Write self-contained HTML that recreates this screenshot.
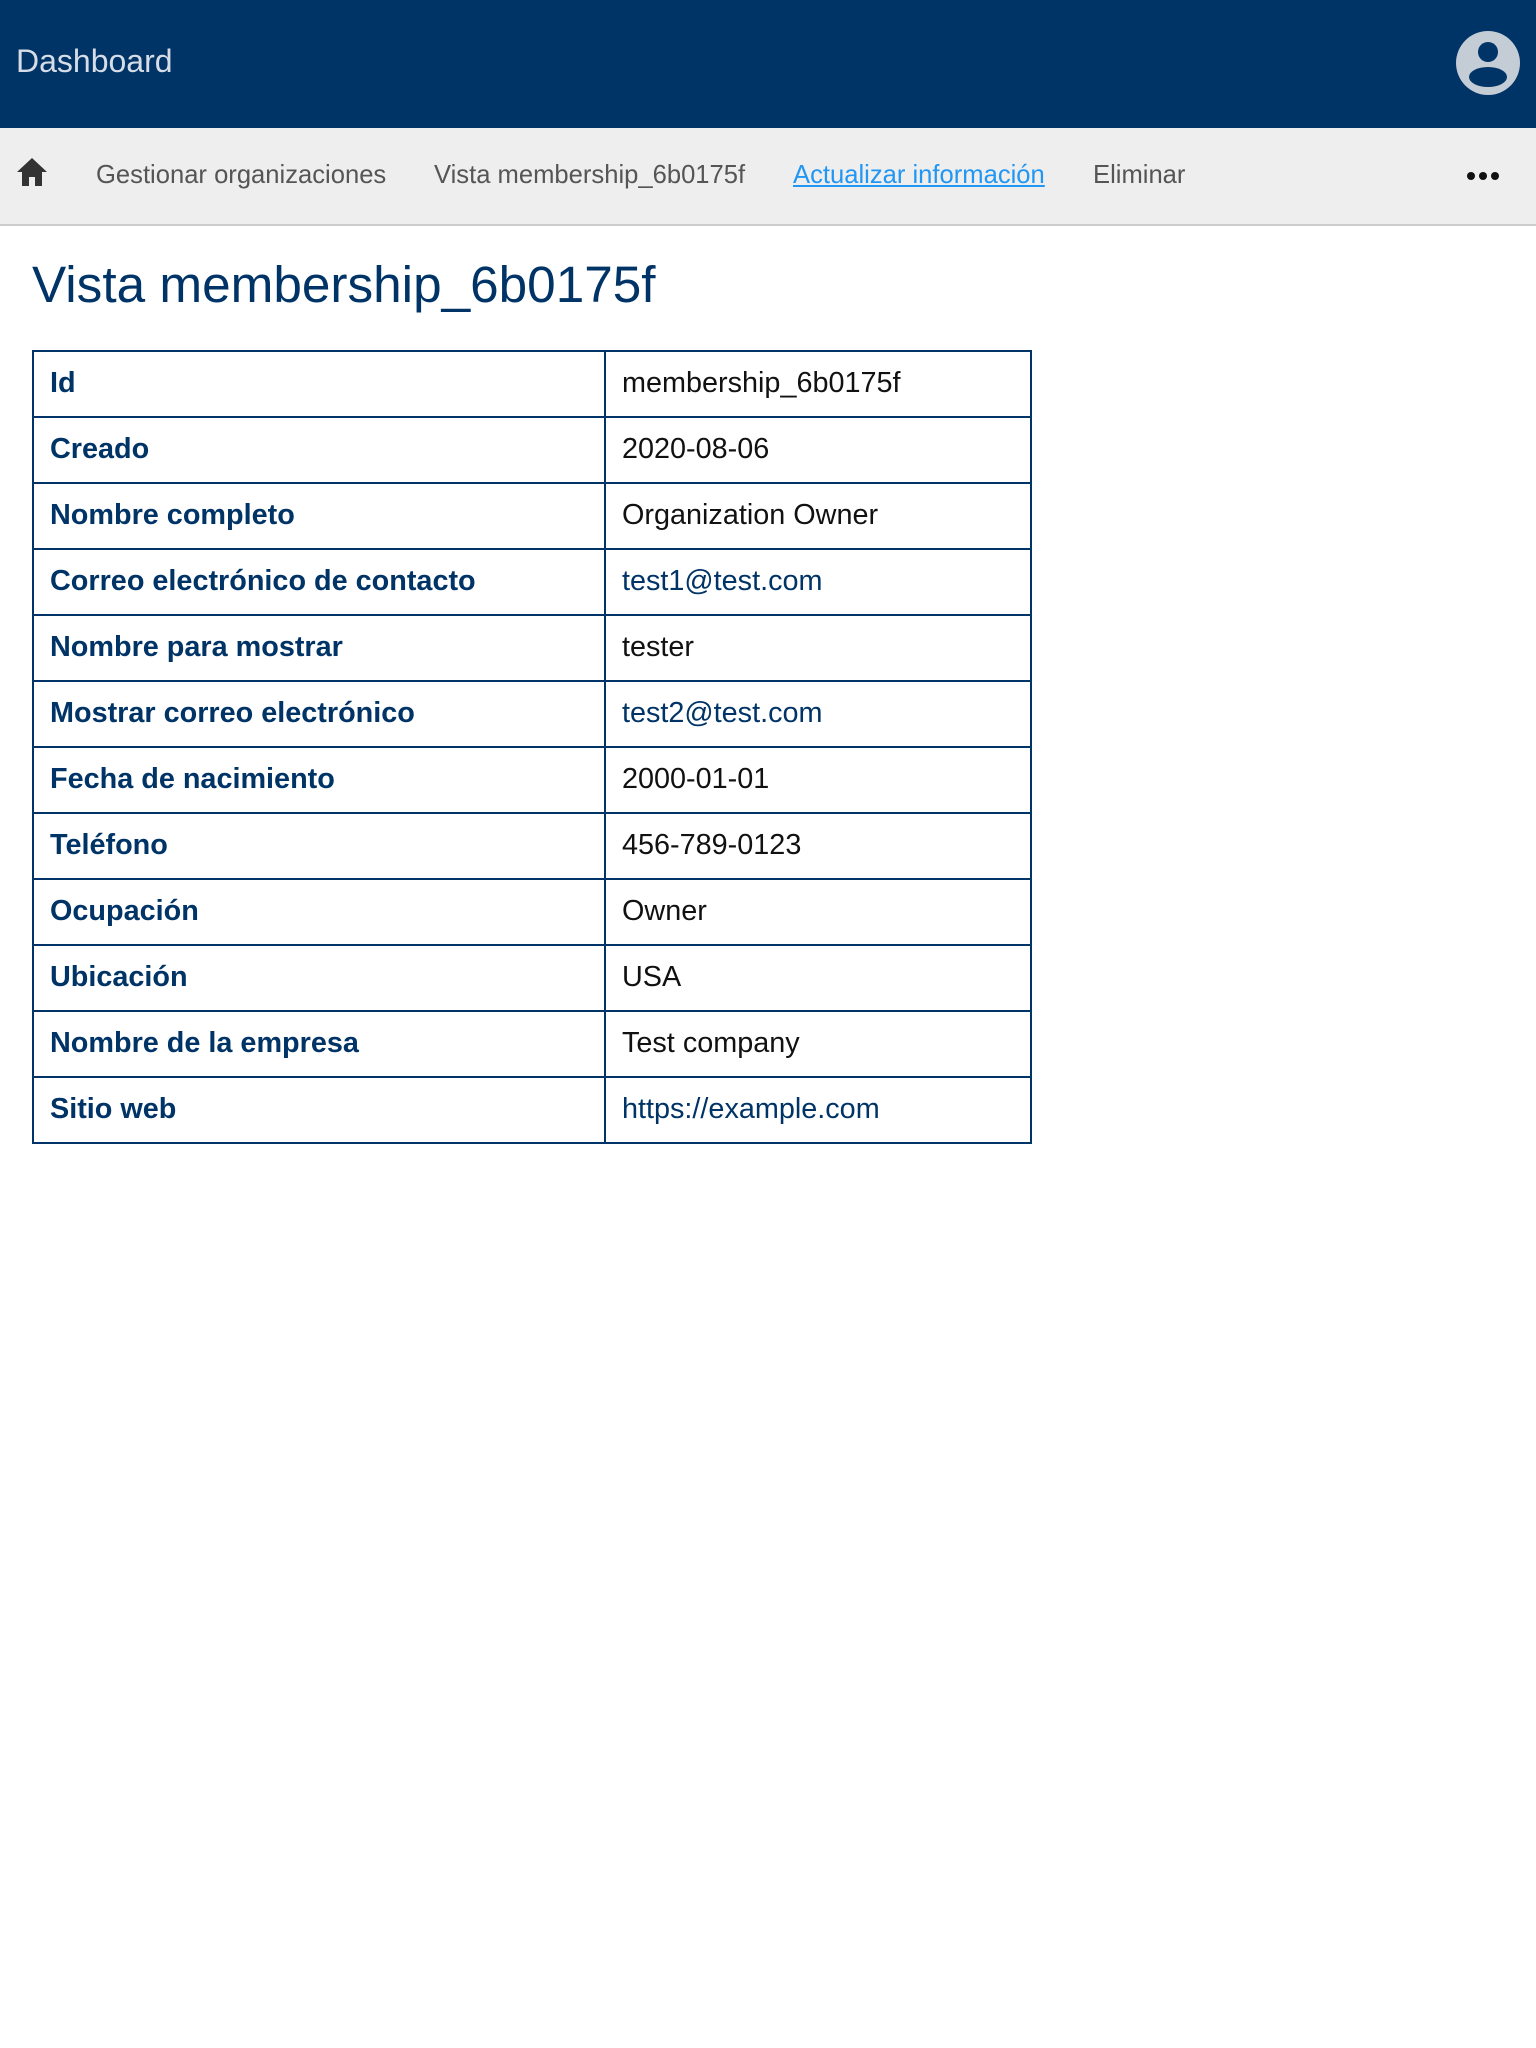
<!DOCTYPE html>
<html><head><meta charset="utf-8"><style>
body{margin:0;width:1536px;height:2048px;background:#fff;font-family:"Liberation Sans",sans-serif;position:relative;overflow:hidden}
.hdr{position:absolute;left:0;top:0;width:1536px;height:128px;background:#003366}
.hdr .t{position:absolute;left:16px;top:43px;font-size:32px;color:#d6dde6}
.nav{position:absolute;left:0;top:128px;width:1536px;height:96px;background:#eeeeee;border-bottom:2px solid #cccccc}
.nav span{position:absolute;top:33px;font-size:25.6px;color:#555}
h1{position:absolute;left:32px;top:255px;margin:0;font-weight:normal;font-size:51.3px;color:#003366}
table{position:absolute;left:32px;top:350px;width:1000px;border-collapse:collapse}
td{border:2px solid #003366;height:62px;box-sizing:content-box;padding:0 0 2px 16px;font-size:28.8px;color:#111}
td:first-child{width:554px;font-weight:bold;color:#003366}
a{color:#003366;text-decoration:none}
</style></head><body>
<div class="hdr"><div class="t">Dashboard</div>
<svg style="position:absolute;left:1456px;top:31px" width="64" height="64" viewBox="0 0 64 64"><circle cx="32" cy="32" r="32" fill="#c4ccd6"/><circle cx="32" cy="21" r="10" fill="#003366"/><ellipse cx="32" cy="46" rx="19" ry="10" fill="#003366"/></svg></div>
<div class="nav">
<svg style="position:absolute;left:16px;top:29px" width="32" height="30" viewBox="0 0 32 30"><path d="M16 1 L1 15 H6 V29 H13 V20 H19 V29 H26 V15 H31 Z" fill="#333"/></svg>
<span style="left:96px">Gestionar organizaciones</span>
<span style="left:434px">Vista membership_6b0175f</span>
<span style="left:793px;color:#2196f3;text-decoration:underline">Actualizar información</span>
<span style="left:1093px">Eliminar</span>
<svg style="position:absolute;left:1466px;top:43px" width="34" height="10"><circle cx="5" cy="5" r="4" fill="#111"/><circle cx="17" cy="5" r="4" fill="#111"/><circle cx="29" cy="5" r="4" fill="#111"/></svg>
</div>
<h1>Vista membership_6b0175f</h1>
<table>
<tr><td>Id</td><td>membership_6b0175f</td></tr>
<tr><td>Creado</td><td>2020-08-06</td></tr>
<tr><td>Nombre completo</td><td>Organization Owner</td></tr>
<tr><td>Correo electrónico de contacto</td><td><a>test1@test.com</a></td></tr>
<tr><td>Nombre para mostrar</td><td>tester</td></tr>
<tr><td>Mostrar correo electrónico</td><td><a>test2@test.com</a></td></tr>
<tr><td>Fecha de nacimiento</td><td>2000-01-01</td></tr>
<tr><td>Teléfono</td><td>456-789-0123</td></tr>
<tr><td>Ocupación</td><td>Owner</td></tr>
<tr><td>Ubicación</td><td>USA</td></tr>
<tr><td>Nombre de la empresa</td><td>Test company</td></tr>
<tr><td>Sitio web</td><td><a>https://example.com</a></td></tr>
</table>
</body></html>
